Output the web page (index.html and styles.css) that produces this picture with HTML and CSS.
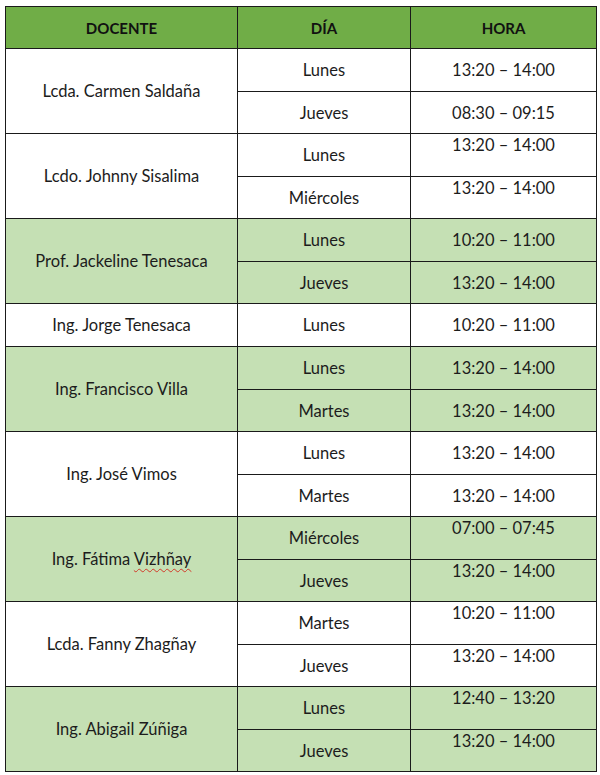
FILE: index.html
```html
<!DOCTYPE html>
<html lang="es">
<head>
<meta charset="utf-8">
<title>Horario</title>
<link rel="stylesheet" href="styles.css">
</head>
<body>
<table class="tabla">
  <colgroup>
    <col class="c-docente">
    <col class="c-dia">
    <col class="c-hora">
  </colgroup>
  <thead>
    <tr class="head">
      <th>DOCENTE</th>
      <th>DÍA</th>
      <th>HORA</th>
    </tr>
  </thead>
  <tbody>
    <tr class="r1"><td rowspan="2">Lcda. Carmen Saldaña</td><td>Lunes</td><td>13:20 – 14:00</td></tr>
    <tr class="r2"><td>Jueves</td><td>08:30 – 09:15</td></tr>

    <tr class="r1"><td rowspan="2">Lcdo. Johnny Sisalima</td><td>Lunes</td><td class="top">13:20 – 14:00</td></tr>
    <tr class="r2"><td>Miércoles</td><td class="top">13:20 – 14:00</td></tr>

    <tr class="r1 g"><td rowspan="2">Prof. Jackeline Tenesaca</td><td>Lunes</td><td>10:20 – 11:00</td></tr>
    <tr class="r2 g"><td>Jueves</td><td>13:20 – 14:00</td></tr>

    <tr class="r1"><td>Ing. Jorge Tenesaca</td><td>Lunes</td><td>10:20 – 11:00</td></tr>

    <tr class="r1 g"><td rowspan="2">Ing. Francisco Villa</td><td>Lunes</td><td>13:20 – 14:00</td></tr>
    <tr class="r2 g"><td>Martes</td><td>13:20 – 14:00</td></tr>

    <tr class="r1"><td rowspan="2">Ing. José Vimos</td><td>Lunes</td><td>13:20 – 14:00</td></tr>
    <tr class="r2"><td>Martes</td><td>13:20 – 14:00</td></tr>

    <tr class="r1 g"><td rowspan="2">Ing. Fátima <span class="spell">Vizhñay</span></td><td>Miércoles</td><td class="top">07:00 – 07:45</td></tr>
    <tr class="r2 g"><td>Jueves</td><td class="top">13:20 – 14:00</td></tr>

    <tr class="r1"><td rowspan="2">Lcda. Fanny Zhagñay</td><td>Martes</td><td class="top">10:20 – 11:00</td></tr>
    <tr class="r2"><td>Jueves</td><td class="top">13:20 – 14:00</td></tr>

    <tr class="r1 g"><td rowspan="2">Ing. Abigail Zúñiga</td><td>Lunes</td><td class="top">12:40 – 13:20</td></tr>
    <tr class="r2 g"><td>Jueves</td><td class="top">13:20 – 14:00</td></tr>
  </tbody>
</table>
</body>
</html>
```
FILE: styles.css
```css
html, body {
  margin: 0;
  padding: 0;
  background: #ffffff;
}
body {
  padding: 6px 4px 0 5px;
  font-family: Lato, "Liberation Sans", sans-serif;
  font-size: 16.5px;
  color: #1c1c1c;
}
.tabla {
  width: 591px;
  border-collapse: collapse;
  table-layout: fixed;
  border: 1px solid #3a3a3a;
}
.c-docente { width: 232px; }
.c-dia { width: 173px; }
.c-hora { width: 186px; }
.tabla th,
.tabla td {
  border: 1px solid #1a1a1a;
  padding: 0 4px;
  text-align: center;
  vertical-align: middle;
  line-height: 18px;
}
.head { height: 42px; }
.head th {
  background: #70ad47;
  font-weight: 700;
  font-size: 15px;
  color: #111;
}
.r1 { height: 43px; }
.r2 { height: 42px; }
.g td { background: #c5e0b4; }
.tabla td.top {
  vertical-align: top;
  padding-top: 2px;
}
.spell {
  text-decoration: underline wavy #d23a2a;
  text-decoration-thickness: 1px;
  text-underline-offset: 3px;
}
```
